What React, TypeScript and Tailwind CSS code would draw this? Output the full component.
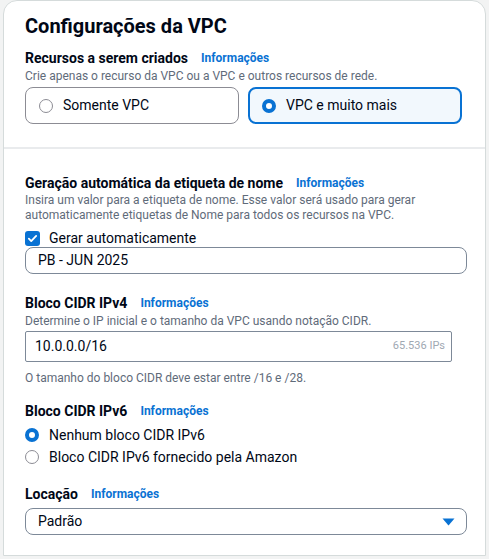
import React from "react";

function Info() {
  return <span className="ml-[13px] text-[12px] font-bold text-[#0972d3]">Informações</span>;
}

function Radio({ checked }: { checked?: boolean }) {
  return checked ? (
    <span className="inline-block w-[14px] h-[14px] rounded-full border-[4px] border-[#0972d3] bg-white shrink-0" />
  ) : (
    <span className="inline-block w-[14px] h-[14px] rounded-full border border-[#8c8c94] bg-white shrink-0" />
  );
}

export default function App() {
  return (
    <div className="w-[489px] h-[559px] bg-[#f2f3f3] pl-[3px] pr-[3px] font-['Roboto',sans-serif] text-[#000716]">
      <div className="w-[483px] h-[556px] bg-white border border-[#d5dbdb] rounded-t-[14px] flex flex-col">
        <div className="px-[21px] pt-[11px] pb-[23px]">
          <h2 className="text-[20px] font-bold leading-[28px]">Configurações da VPC</h2>
          <div className="mt-[9px] flex items-center text-[14px] font-bold leading-[18px]">
            Recursos a serem criados <Info />
          </div>
          <p className="text-[12px] leading-[16px] text-[#5f6b7a] mt-[1px]">
            Crie apenas o recurso da VPC ou a VPC e outros recursos de rede.
          </p>
          <div className="mt-[3px] grid grid-cols-2 gap-[9px] w-[437px]">
            <div className="h-[37px] rounded-[8px] border border-[#8c8c94] flex items-center pl-[13px] gap-[10px] text-[14px]">
              <Radio /> Somente VPC
            </div>
            <div className="h-[37px] rounded-[8px] border-2 border-[#0972d3] bg-[#f2f8fd] flex items-center pl-[12px] gap-[10px] text-[14px]">
              <Radio checked /> VPC e muito mais
            </div>
          </div>
        </div>
        <div className="border-t-2 border-[#e9ebed] px-[21px] pt-[25px]">
          <div className="flex items-center text-[14px] font-bold leading-[18px]">
            Geração automática da etiqueta de nome <Info />
          </div>
          <p className="text-[12px] leading-[15px] text-[#5f6b7a] mt-[1px]">
            Insira um valor para a etiqueta de nome. Esse valor será usado para gerar automaticamente etiquetas de Nome para todos os recursos na VPC.
          </p>
          <div className="mt-[6px] flex items-center gap-[9px] text-[14px] leading-[18px]">
            <span className="w-[15px] h-[15px] rounded-[3px] bg-[#0972d3] flex items-center justify-center">
              <svg width="11" height="11" viewBox="0 0 12 12" fill="none">
                <path d="M2 6.2l2.6 2.6L10 3.2" stroke="white" strokeWidth="2" strokeLinecap="round" strokeLinejoin="round" />
              </svg>
            </span>
            Gerar automaticamente
          </div>
          <div className="mt-0 w-[442px] h-[27px] rounded-[8px] border border-[#7d8998] flex items-center pl-[12px] text-[14px]">
            PB - JUN 2025
          </div>

          <div className="mt-[20px] flex items-center text-[14px] font-bold leading-[18px]">
            Bloco CIDR IPv4 <Info />
          </div>
          <p className="text-[12px] leading-[16px] text-[#5f6b7a] mt-[1px]">
            Determine o IP inicial e o tamanho da VPC usando notação CIDR.
          </p>
          <div className="mt-[2px] w-[427px] h-[31px] rounded-[2px] border border-[#7d8998] flex items-center justify-between pl-[9px] pr-[6px] text-[14px]">
            <span>10.0.0.0/16</span>
            <span className="text-[11px] text-[#a0a8b2]">65.536 IPs</span>
          </div>
          <p className="mt-[8px] text-[12px] leading-[16px] text-[#5f6b7a]">
            O tamanho do bloco CIDR deve estar entre /16 e /28.
          </p>

          <div className="mt-[16px] flex items-center text-[14px] font-bold leading-[18px]">
            Bloco CIDR IPv6 <Info />
          </div>
          <div className="mt-[6px] flex items-center gap-[10px] text-[14px] leading-[18px]">
            <Radio checked /> Nenhum bloco CIDR IPv6
          </div>
          <div className="mt-[4px] flex items-center gap-[10px] text-[14px] leading-[18px]">
            <Radio /> Bloco CIDR IPv6 fornecido pela Amazon
          </div>

          <div className="mt-[19px] flex items-center text-[14px] font-bold leading-[18px]">
            Locação <Info />
          </div>
          <div className="mt-[5px] w-[442px] h-[27px] rounded-[8px] border border-[#7d8998] flex items-center justify-between pl-[12px] pr-[11px] text-[14px]">
            <span>Padrão</span>
            <svg width="13" height="8" viewBox="0 0 13 8">
              <path d="M0.5 0.5h12L6.5 7.5z" fill="#0972d3" />
            </svg>
          </div>
        </div>
      </div>
    </div>
  );
}
